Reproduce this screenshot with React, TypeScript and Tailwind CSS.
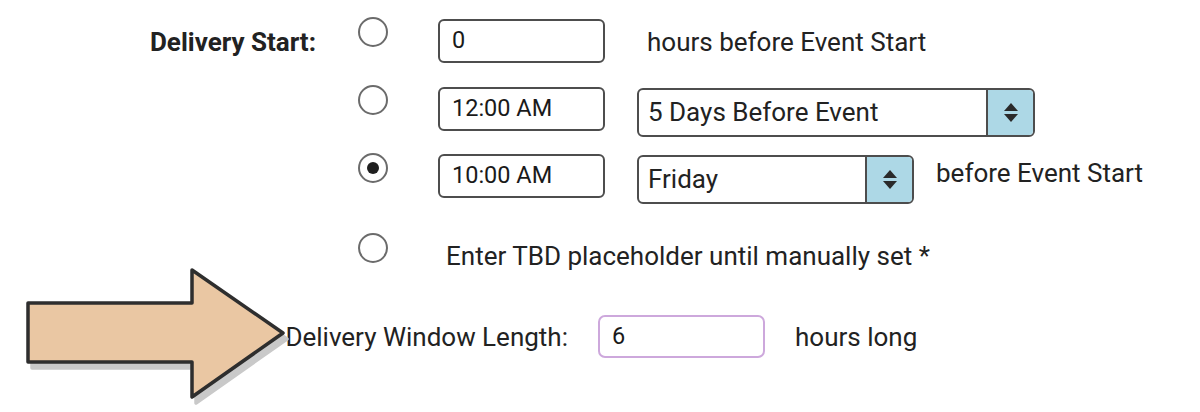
import React from "react";

function Radio({ checked = false }: { checked?: boolean }) {
  return (
    <div className="w-[30px] h-[30px] rounded-full border-[2.5px] border-[#6b6b6b] bg-white flex items-center justify-center shrink-0">
      {checked && <div className="w-[12px] h-[12px] rounded-full bg-[#1f1f1f]" />}
    </div>
  );
}

function TextBox({ value, className = "" }: { value: string; className?: string }) {
  return (
    <div
      className={
        "w-[167px] h-[44px] rounded-[6px] border-2 border-[#4d4d4d] bg-white flex items-center pl-[12px] text-[23.5px] text-[#1a1a1a] shrink-0 " +
        className
      }
    >
      {value}
    </div>
  );
}

function Select({ value, width }: { value: string; width: string }) {
  return (
    <div
      className={
        "h-[49px] rounded-[6px] border-2 border-[#4d4d4d] bg-white flex items-stretch overflow-hidden shrink-0 " +
        width
      }
    >
      <div className="flex-1 flex items-center pl-[9px] text-[26px] text-[#222]">{value}</div>
      <div className="w-[47px] border-l-2 border-[#4d4d4d] bg-[#add8e6] flex flex-col items-center justify-center gap-[3px]">
        <svg width="14" height="8" viewBox="0 0 14 8">
          <polygon points="7,0 14,8 0,8" fill="#2a2a2a" />
        </svg>
        <svg width="14" height="8" viewBox="0 0 14 8">
          <polygon points="0,0 14,0 7,8" fill="#2a2a2a" />
        </svg>
      </div>
    </div>
  );
}

export default function App() {
  return (
    <div
      className="relative w-[1200px] h-[412px] bg-white overflow-hidden text-[#222]"
      style={{ fontFamily: "Roboto, 'Noto Sans', sans-serif" }}
    >
      <div className="flex flex-col pt-[17px]">
        {/* Row 1 */}
        <div className="flex items-start h-[68px]">
          <div className="w-[316px] text-right font-bold text-[26px] leading-[30px] mt-[10px] shrink-0">
            Delivery Start:
          </div>
          <div className="ml-[42px]">
            <Radio />
          </div>
          <div className="ml-[50px] mt-[2px]">
            <TextBox value="0" />
          </div>
          <div className="ml-[42px] mt-[10px] text-[26px] leading-[30px]">hours before Event Start</div>
        </div>

        {/* Row 2 */}
        <div className="flex items-start h-[68px]">
          <div className="w-[316px] shrink-0" />
          <div className="ml-[42px]">
            <Radio />
          </div>
          <div className="ml-[50px] mt-[2px]">
            <TextBox value="12:00 AM" />
          </div>
          <div className="ml-[32px] mt-[3px]">
            <Select value="5 Days Before Event" width="w-[398px]" />
          </div>
        </div>

        {/* Row 3 */}
        <div className="flex items-start h-[80px]">
          <div className="w-[316px] shrink-0" />
          <div className="ml-[42px]">
            <Radio checked />
          </div>
          <div className="ml-[50px] mt-[1px]">
            <TextBox value="10:00 AM" />
          </div>
          <div className="ml-[32px] mt-[2px]">
            <Select value="Friday" width="w-[277px]" />
          </div>
          <div className="ml-[22px] mt-[5px] text-[26px] leading-[30px]">before Event Start</div>
        </div>

        {/* Row 4 */}
        <div className="flex items-start h-[82px]">
          <div className="w-[316px] shrink-0" />
          <div className="ml-[42px]">
            <Radio />
          </div>
          <div className="ml-[58px] mt-[8px] text-[26px] leading-[30px]">
            Enter TBD placeholder until manually set *
          </div>
        </div>

        {/* Row 5 */}
        <div className="flex items-center h-[43px]">
          <div className="w-[568px] text-right text-[26px] leading-[30px] shrink-0">Delivery Window Length:</div>
          <div className="ml-[30px] w-[167px] h-[43px] rounded-[7px] border-2 border-[#cda8dc] bg-white flex items-center pl-[12px] text-[23.5px] text-[#1a1a1a] shrink-0">
            6
          </div>
          <div className="ml-[30px] text-[26px] leading-[30px]">hours long</div>
        </div>
      </div>

      {/* Annotation arrow */}
      <svg className="absolute left-0 top-0" width="300" height="412" viewBox="0 0 300 412">
        <path
          d="M28,303 L192,303 L192,270 L283,333 L192,397 L192,362 L28,362 Z"
          transform="translate(4,6)"
          fill="#c9c9c9"
          stroke="#c9c9c9"
          strokeWidth="3.5"
          strokeLinejoin="round"
        />
        <path
          d="M28,303 L192,303 L192,270 L283,333 L192,397 L192,362 L28,362 Z"
          fill="#eac7a3"
          stroke="#2e2e2e"
          strokeWidth="3.5"
          strokeLinejoin="round"
        />
      </svg>
    </div>
  );
}
